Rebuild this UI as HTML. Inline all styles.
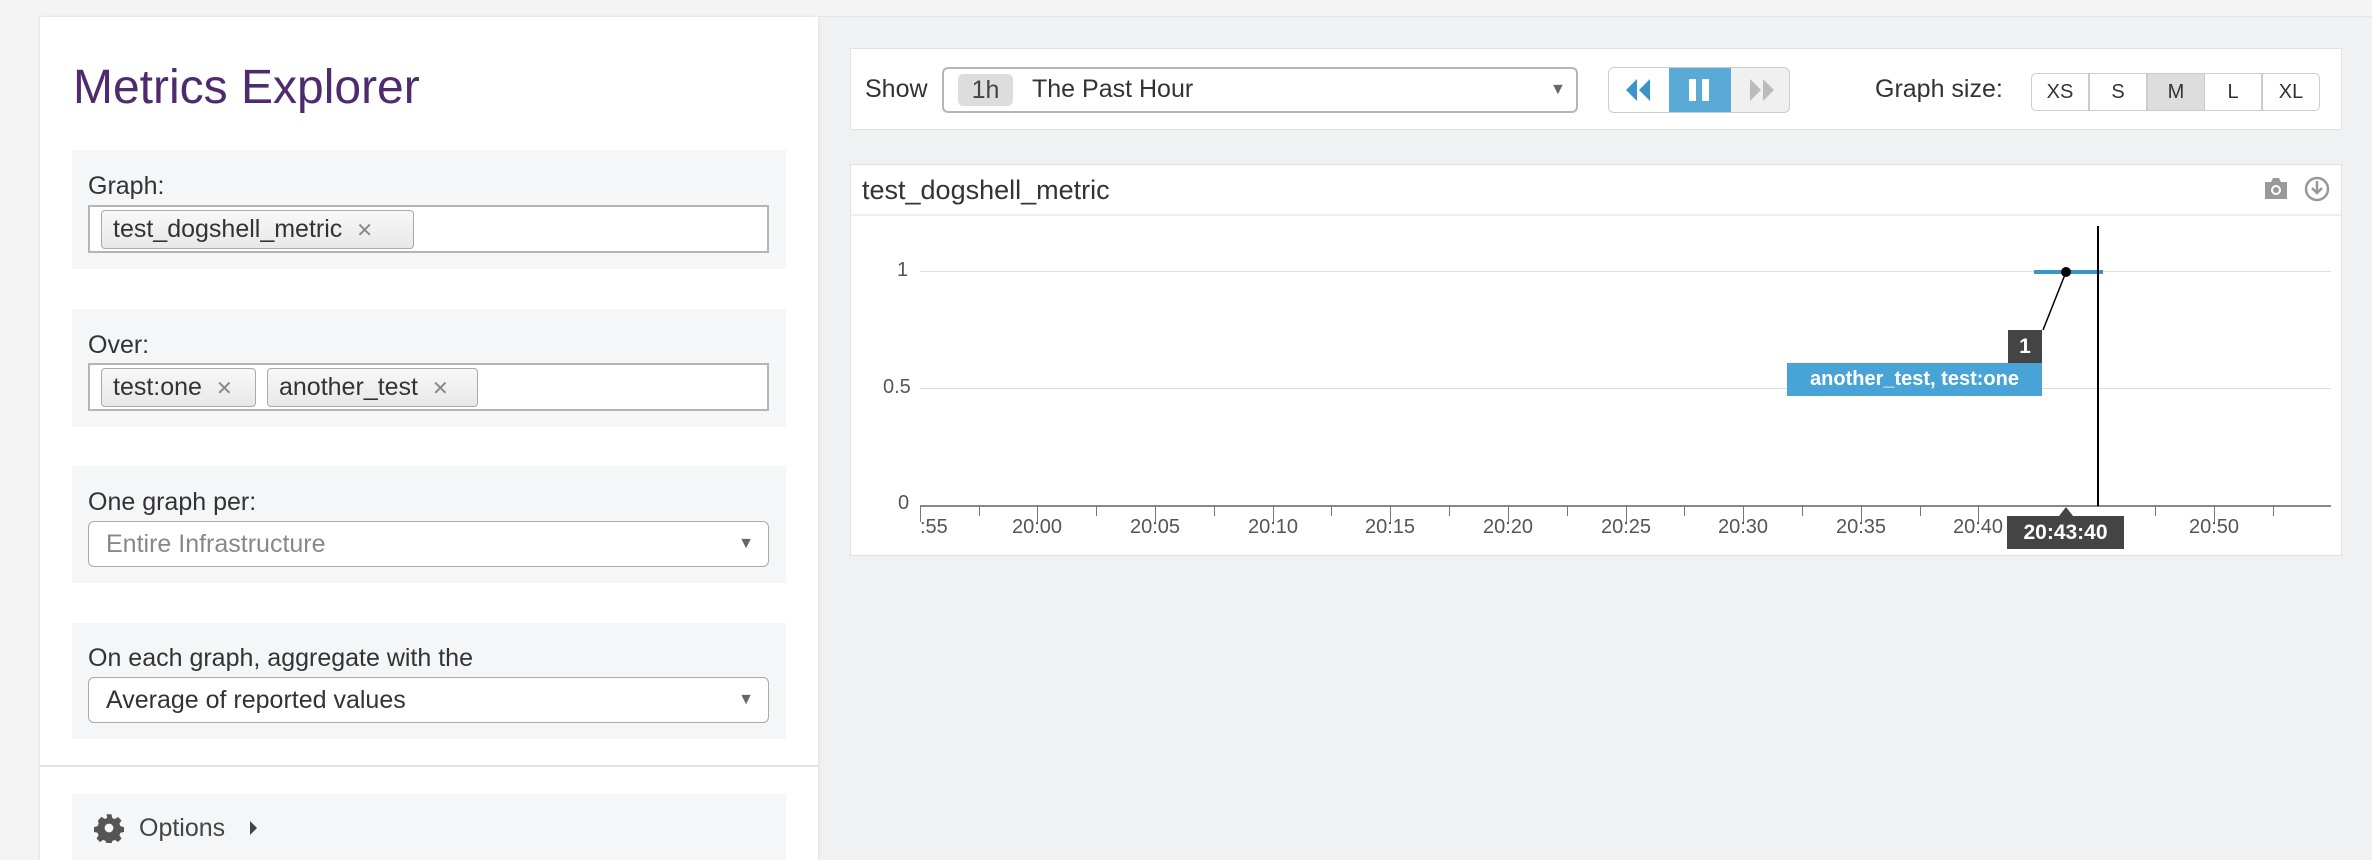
<!DOCTYPE html>
<html><head><meta charset="utf-8"><style>
*{box-sizing:border-box;margin:0;padding:0}
body{width:2372px;height:860px;overflow:hidden;background:#f0f1f2;font-family:"Liberation Sans","DejaVu Sans",sans-serif;color:#333;position:relative}
.abs{position:absolute}
.sec{position:absolute;left:72px;width:714px;background:#f5f6f7}
.lbl{position:absolute;left:16px;font-size:25px;color:#333}
.inp{position:absolute;left:16px;width:681px;height:48px;background:#fff;border:2px solid #b5b5b5}
.tag{position:absolute;top:3px;height:39px;border:1px solid #aaa;border-radius:4px;background:linear-gradient(#f8f8f8,#e8e8e8);font-size:25px;line-height:37px;padding-left:11px;color:#333}
.tag i{font-style:normal;color:#888;font-size:20px;margin-left:14px}
.sel{position:absolute;left:16px;width:681px;height:46px;background:#fff;border:1px solid #aaa;border-radius:6px;font-size:25px;line-height:44px;padding-left:17px}
.sel .c{position:absolute;right:14px;top:0;font-size:16px;color:#666}
.tick{position:absolute;top:506px;width:1px;height:10px;background:#777}
.tl{position:absolute;top:516px;font-size:20px;color:#555;transform:translateX(-50%)}
.sz{position:absolute;top:73px;height:38px;width:58px;border:1px solid #ccc;text-align:center;line-height:36px;font-size:20px;color:#333;background:#fff}
</style></head><body>
<div class="abs" style="left:0;top:0;width:2372px;height:17px;background:#f4f4f4"></div>
<div class="abs" style="left:0;top:0;width:41px;height:860px;background:#f3f3f3"></div>
<div class="abs" style="left:818px;top:0;width:1554px;height:17px;background:#f4f4f4;border-bottom:1px solid #e6e6e6"></div>
<!-- left panel -->
<div class="abs" style="left:40px;top:17px;width:778px;height:843px;background:#fff;box-shadow:0 0 3px rgba(0,0,0,.12)"></div>
<div class="abs" style="left:73px;top:60px;font-size:48px;color:#4f2a6e;font-weight:300">Metrics Explorer</div>

<div class="sec" style="top:150px;height:119px">
  <div class="lbl" style="top:22px">Graph:</div>
  <div class="inp" style="top:55px">
    <div class="tag" style="left:11px;width:313px">test_dogshell_metric<i>✕</i></div>
  </div>
</div>
<div class="sec" style="top:309px;height:118px">
  <div class="lbl" style="top:22px">Over:</div>
  <div class="inp" style="top:54px">
    <div class="tag" style="left:11px;width:155px">test:one<i>✕</i></div>
    <div class="tag" style="left:177px;width:211px">another_test<i>✕</i></div>
  </div>
</div>
<div class="sec" style="top:466px;height:117px">
  <div class="lbl" style="top:22px">One graph per:</div>
  <div class="sel" style="top:55px;color:#888">Entire Infrastructure<span class="c">▼</span></div>
</div>
<div class="sec" style="top:623px;height:116px">
  <div class="lbl" style="top:21px">On each graph, aggregate with the</div>
  <div class="sel" style="top:54px;color:#333">Average of reported values<span class="c">▼</span></div>
</div>
<div class="abs" style="left:40px;top:765px;width:778px;height:2px;background:#e3e3e3"></div>
<div class="sec" style="top:794px;height:66px">
  <svg class="abs" style="left:22px;top:19px" width="30" height="30" viewBox="0 0 24 24"><path fill="#555" d="M10 1h4l.6 3 2 .9 2.6-1.7 2.8 2.8-1.7 2.6.9 2 3 .6v4l-3 .6-.9 2 1.7 2.6-2.8 2.8-2.6-1.7-2 .9-.6 3h-4l-.6-3-2-.9-2.6 1.7-2.8-2.8 1.7-2.6-.9-2-3-.6v-4l3-.6.9-2L3.2 5.9 6 3.1l2.6 1.7 2-.9zM12 8.5a3.5 3.5 0 1 0 0 7 3.5 3.5 0 0 0 0-7z"/></svg>
  <div class="abs" style="left:67px;top:20px;font-size:25px;color:#444">Options</div>
  <div class="abs" style="left:178px;top:27px;width:0;height:0;border-left:7px solid #444;border-top:7px solid transparent;border-bottom:7px solid transparent"></div>
</div>

<!-- toolbar -->
<div class="abs" style="left:850px;top:48px;width:1492px;height:82px;background:#fff;border:1px solid #e2e2e2"></div>
<div class="abs" style="left:865px;top:75px;font-size:25px">Show</div>
<div class="abs" style="left:942px;top:67px;width:636px;height:46px;border:2px solid #b5b5b5;border-radius:6px;background:#fff"></div>
<div class="abs" style="left:958px;top:74px;width:55px;height:32px;background:#ddd;border-radius:5px;font-size:25px;line-height:32px;text-align:center;color:#444">1h</div>
<div class="abs" style="left:1032px;top:75px;font-size:25px">The Past Hour</div>
<div class="abs" style="left:1550px;top:81px;font-size:16px;color:#666">▼</div>
<div class="abs" style="left:1608px;top:67px;width:182px;height:46px;border:1px solid #ccc;border-radius:6px;background:#f0f0f0;overflow:hidden">
  <div class="abs" style="left:0;top:0;width:60px;height:46px;background:#fff"></div>
  <div class="abs" style="left:60px;top:0;width:62px;height:46px;background:#5aaad8"></div>
</div>
<svg class="abs" style="left:1625px;top:79px" width="26" height="22" viewBox="0 0 26 22"><path fill="#3a94c8" d="M12 0v22L1 11zM25 0v22L14 11z"/></svg>
<div class="abs" style="left:1689px;top:79px;width:7px;height:22px;background:#fff"></div>
<div class="abs" style="left:1702px;top:79px;width:7px;height:22px;background:#fff"></div>
<svg class="abs" style="left:1749px;top:79px" width="26" height="22" viewBox="0 0 26 22"><path fill="#bbb" d="M1 0v22l11-11zM14 0v22l11-11z"/></svg>
<div class="abs" style="left:1875px;top:75px;font-size:25px">Graph size:</div>
<div class="sz" style="left:2031px;border-radius:5px 0 0 5px">XS</div>
<div class="sz" style="left:2089px">S</div>
<div class="sz" style="left:2147px;background:#ddd">M</div>
<div class="sz" style="left:2204px">L</div>
<div class="sz" style="left:2262px;border-radius:0 5px 5px 0">XL</div>

<!-- graph panel -->
<div class="abs" style="left:850px;top:164px;width:1492px;height:392px;background:#fff;border:1px solid #e2e2e2"></div>
<div class="abs" style="left:851px;top:214px;width:1490px;height:2px;background:#eceeef"></div>
<div class="abs" style="left:862px;top:175px;font-size:27px;color:#333">test_dogshell_metric</div>
<svg class="abs" style="left:2262px;top:175px" width="28" height="28" viewBox="0 0 28 28"><path fill="#999" d="M3 7h6l2-4h6l2 4h6v17H3z"/><circle cx="14" cy="15" r="5" fill="#fff"/><circle cx="14" cy="15" r="3" fill="#999"/></svg>
<svg class="abs" style="left:2303px;top:175px" width="28" height="28" viewBox="0 0 28 28"><circle cx="14" cy="14" r="11" fill="none" stroke="#999" stroke-width="2.5"/><path d="M14 6v12M9 13l5 5 5-5" fill="none" stroke="#999" stroke-width="2.5"/></svg>

<!-- grid -->
<div class="abs" style="left:920px;top:271px;width:1411px;height:1px;background:#ddd"></div>
<div class="abs" style="left:920px;top:388px;width:1411px;height:1px;background:#ddd"></div>
<div class="abs" style="left:920px;top:505px;width:1411px;height:2px;background:#888"></div>
<div class="abs" style="left:897px;top:259px;font-size:20px;color:#555">1</div>
<div class="abs" style="left:883px;top:376px;font-size:20px;color:#555">0.5</div>
<div class="abs" style="left:898px;top:492px;font-size:20px;color:#555">0</div>
<div class="tick" style="left:920px;height:16px"></div>
<div class="tick" style="left:1037px;height:16px"></div><div class="tick" style="left:1155px;height:16px"></div><div class="tick" style="left:1273px;height:16px"></div><div class="tick" style="left:1390px;height:16px"></div><div class="tick" style="left:1508px;height:16px"></div><div class="tick" style="left:1626px;height:16px"></div><div class="tick" style="left:1743px;height:16px"></div><div class="tick" style="left:1861px;height:16px"></div><div class="tick" style="left:1978px;height:16px"></div><div class="tick" style="left:2214px;height:16px"></div>
<div class="tick" style="left:979px"></div><div class="tick" style="left:1096px"></div><div class="tick" style="left:1214px"></div><div class="tick" style="left:1331px"></div><div class="tick" style="left:1449px"></div><div class="tick" style="left:1567px"></div><div class="tick" style="left:1684px"></div><div class="tick" style="left:1802px"></div><div class="tick" style="left:1920px"></div><div class="tick" style="left:2155px"></div><div class="tick" style="left:2273px"></div>
<div class="abs" style="left:920px;top:516px;font-size:20px;color:#555">:55</div>
<div class="tl" style="left:1037px">20:00</div><div class="tl" style="left:1155px">20:05</div><div class="tl" style="left:1273px">20:10</div><div class="tl" style="left:1390px">20:15</div><div class="tl" style="left:1508px">20:20</div><div class="tl" style="left:1626px">20:25</div><div class="tl" style="left:1743px">20:30</div><div class="tl" style="left:1861px">20:35</div><div class="tl" style="left:1978px">20:40</div><div class="tl" style="left:2214px">20:50</div>

<!-- data -->
<div class="abs" style="left:2034px;top:270px;width:69px;height:4px;background:#3a94c8"></div>
<div class="abs" style="left:2097px;top:226px;width:2px;height:280px;background:#000"></div>
<svg class="abs" style="left:2030px;top:260px" width="50" height="80"><line x1="36" y1="12" x2="13" y2="70" stroke="#000" stroke-width="1.5"/><circle cx="36" cy="12" r="5" fill="#000"/></svg>
<div class="abs" style="left:2008px;top:330px;width:34px;height:33px;background:#444;color:#fff;font-size:21px;font-weight:bold;text-align:center;line-height:33px">1</div>
<div class="abs" style="left:1787px;top:363px;width:255px;height:33px;background:#48a3d6;color:#fff;font-size:20px;font-weight:bold;text-align:center;line-height:33px">another_test, test:one</div>
<div class="abs" style="left:2059px;top:507px;width:0;height:0;border-left:7px solid transparent;border-right:7px solid transparent;border-bottom:9px solid #444"></div>
<div class="abs" style="left:2007px;top:516px;width:117px;height:33px;background:#444;color:#fff;font-size:21px;font-weight:bold;text-align:center;line-height:33px">20:43:40</div>
</body></html>
